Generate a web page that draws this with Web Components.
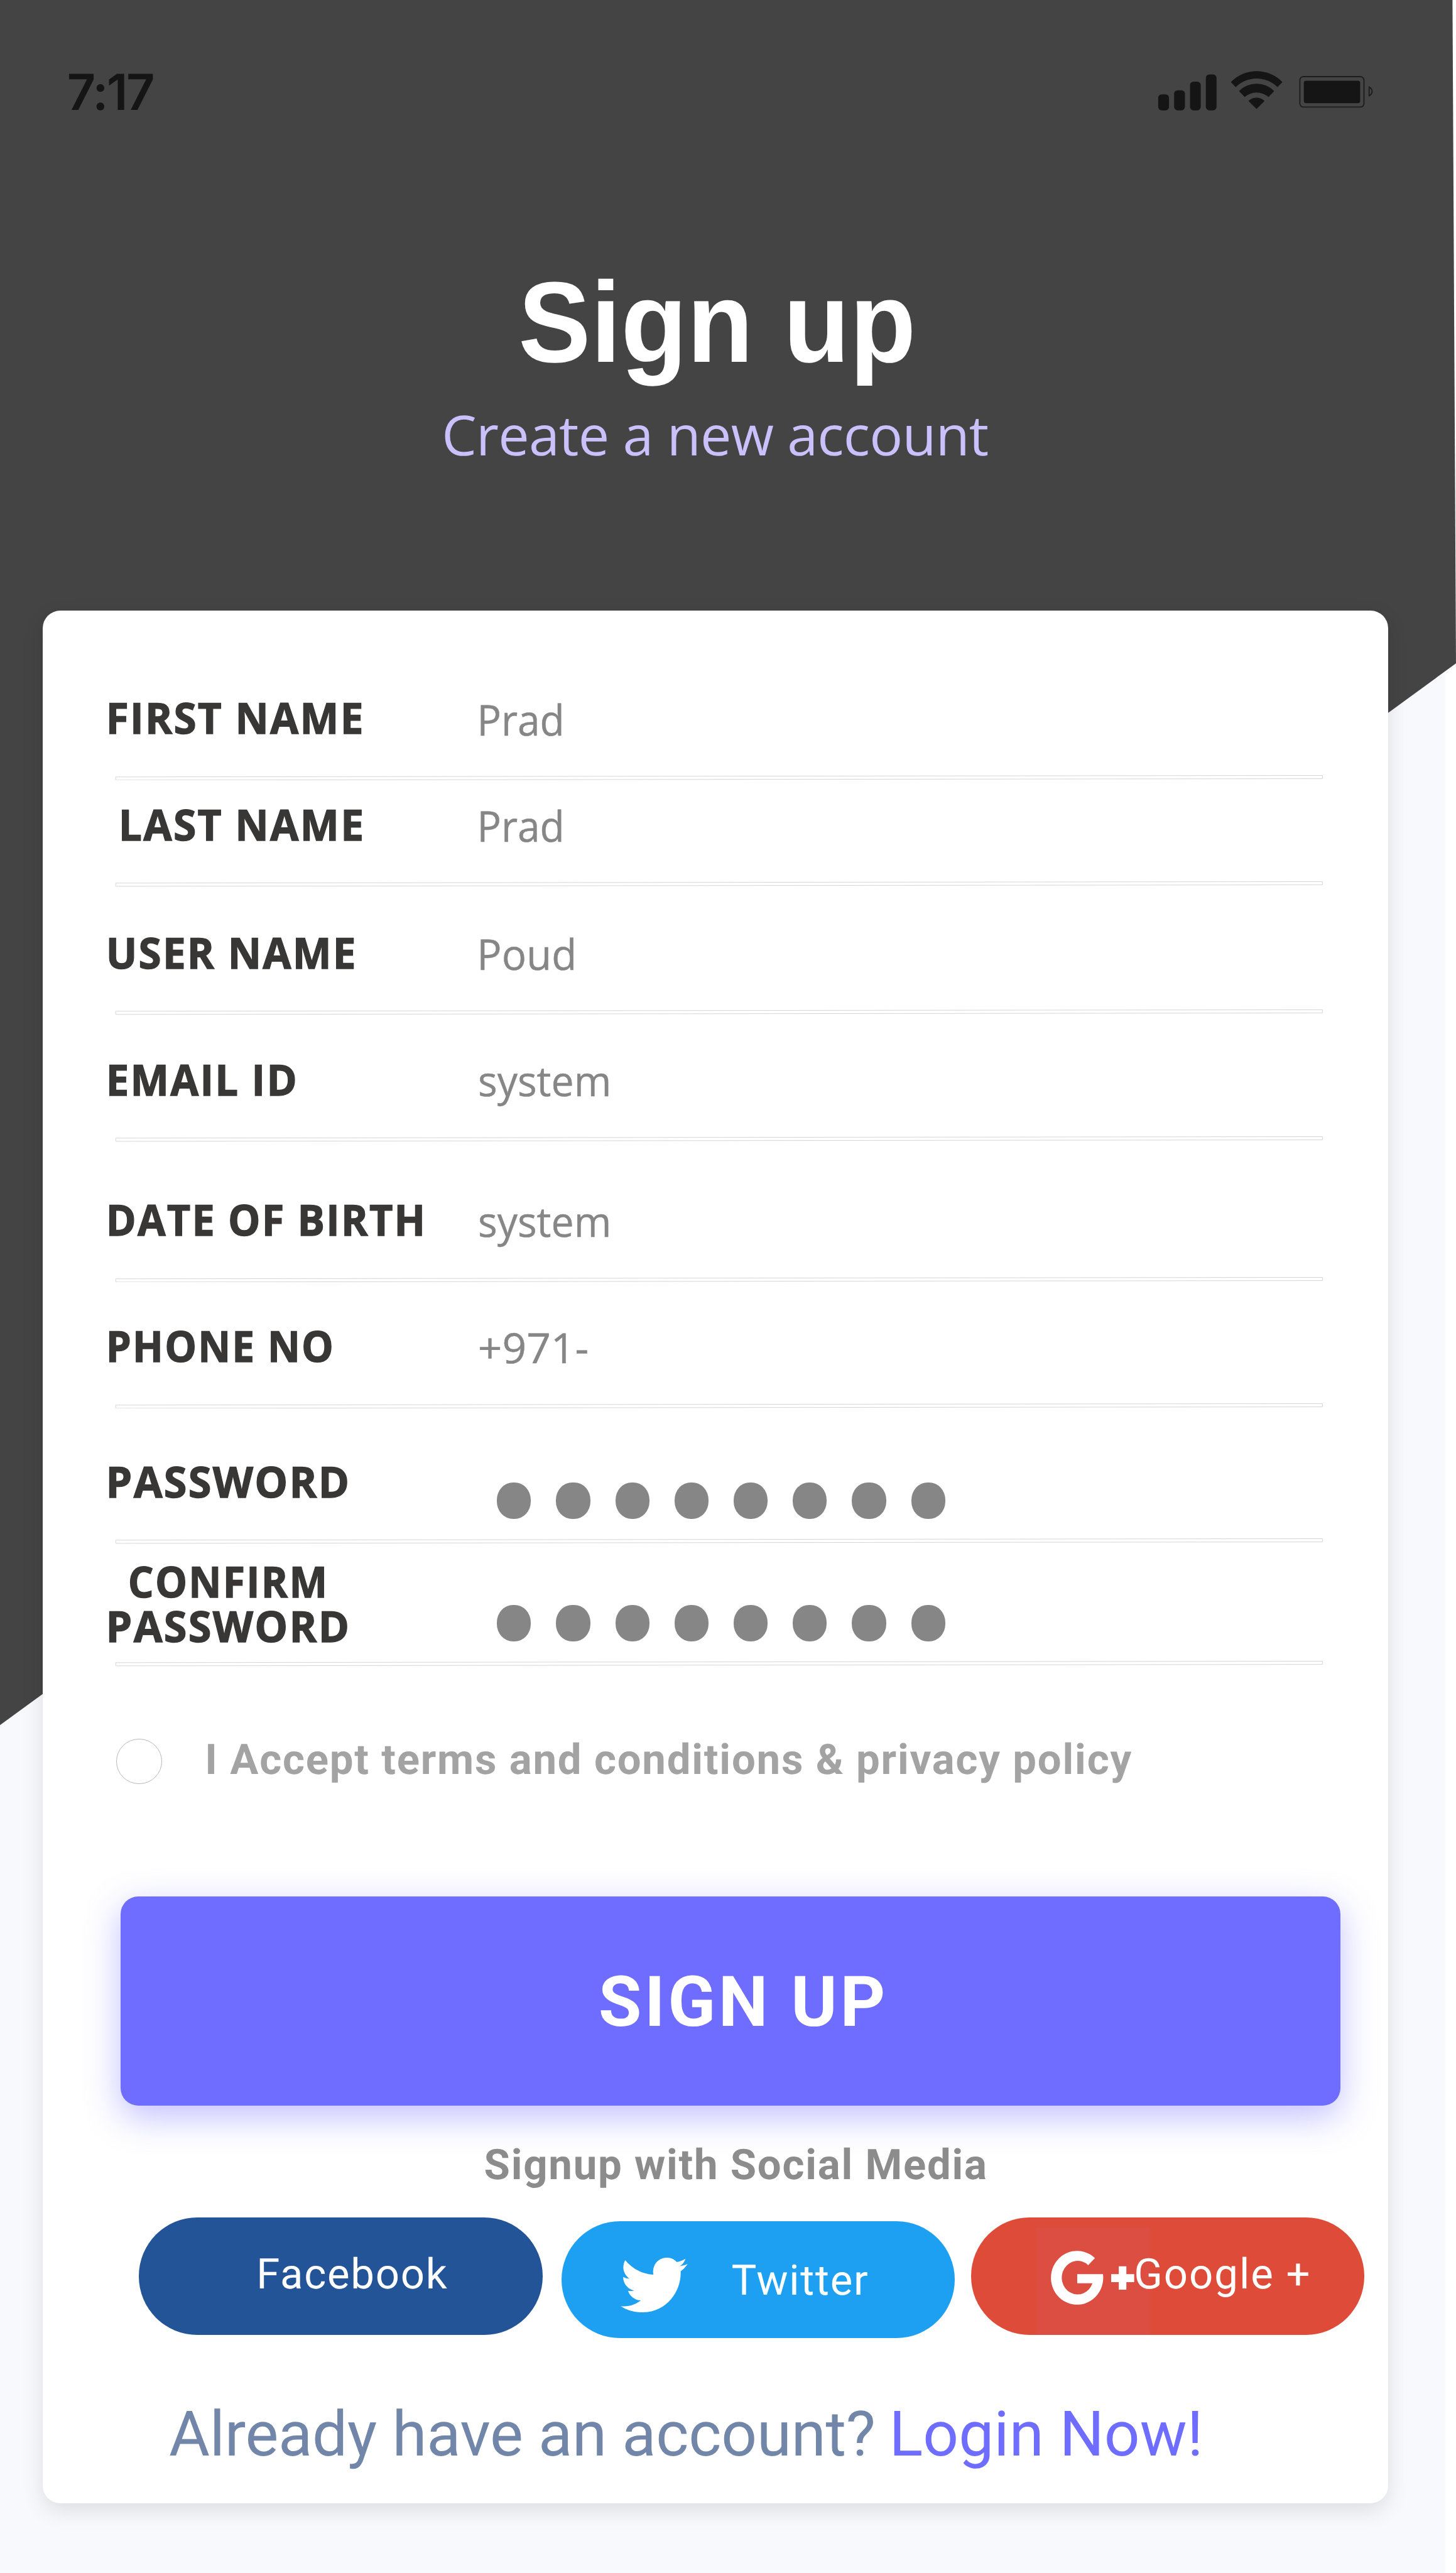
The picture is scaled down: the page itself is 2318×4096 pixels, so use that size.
<!DOCTYPE html>
<html lang="en">
<head>
<meta charset="utf-8">
<title>Sign up</title>
<style>
html, body { margin: 0; width: 2318px; height: 4096px; overflow: hidden; background: #fff; }
</style>
</head>
<body>
<signup-screen>
  <status-bar></status-bar>
  <page-heading>
    <ink-text slot="title" font="Liberation Sans" size="196" weight="700" width="670" height="136" squeeze>Sign up</ink-text>
    <ink-text slot="subtitle" font="Open Sans" size="94.5" weight="400" width="929" height="68">Create a new account</ink-text>
  </page-heading>
  <form-card>
    <field-row style="--h:283.8px">
      <ink-text slot="label" font="Open Sans" size="73.2" weight="700" width="433.6" height="52.3" track="2.5" outline="1.3" squeeze>FIRST NAME</ink-text>
      <ink-text slot="value" font="Open Sans" size="72.4" weight="400" width="139.6" height="52" outline="1" squeeze>Prad</ink-text>
    </field-row>
    <field-row style="--h:181.8px;--lx:20.7px">
      <ink-text slot="label" font="Open Sans" size="73.2" weight="700" width="412.9" height="52.3" track="2.5" outline="1.3" squeeze>LAST NAME</ink-text>
      <ink-text slot="value" font="Open Sans" size="72.4" weight="400" width="139.6" height="52" outline="1" squeeze>Prad</ink-text>
    </field-row>
    <field-row style="--h:218.7px">
      <ink-text slot="label" font="Open Sans" size="73.2" weight="700" width="420.9" height="52.3" track="2.5" outline="1.3" squeeze>USER NAME</ink-text>
      <ink-text slot="value" font="Open Sans" size="72.4" weight="400" width="160.3" height="52" outline="1" squeeze>Poud</ink-text>
    </field-row>
    <field-row style="--h:216.9px">
      <ink-text slot="label" font="Open Sans" size="73.2" weight="700" width="319.6" height="52.3" track="2.5" outline="1.3" squeeze>EMAIL ID</ink-text>
      <ink-text slot="value" font="Open Sans" size="71" weight="400" width="220" height="52" squeeze>system</ink-text>
    </field-row>
    <field-row style="--h:240.1px">
      <ink-text slot="label" font="Open Sans" size="73.2" weight="700" width="537.3" height="52.3" track="2.5" outline="1.3" squeeze>DATE OF BIRTH</ink-text>
      <ink-text slot="value" font="Open Sans" size="71" weight="400" width="220" height="52" squeeze>system</ink-text>
    </field-row>
    <field-row style="--h:215px">
      <ink-text slot="label" font="Open Sans" size="73.2" weight="700" width="382.6" height="52.3" track="2.5" outline="1.3" squeeze>PHONE NO</ink-text>
      <ink-text slot="value" font="Open Sans" size="71" weight="400" width="184.2" height="52" squeeze>+971-</ink-text>
    </field-row>
    <field-row style="--h:231.5px;--vb:-37px;--vx:29px">
      <ink-text slot="label" font="Open Sans" size="73.2" weight="700" width="409" height="52.3" track="2.5" outline="1.3" squeeze>PASSWORD</ink-text>
      <mask-dots slot="value"></mask-dots>
    </field-row>
    <field-row style="--h:209.2px;--pb:33.1px;--vb:.7px;--vx:29px">
      <ink-text slot="label" font="Open Sans" size="73.2" weight="700" width="334" height="52.3" track="2.5" outline="1.3" squeeze style="margin:0 0 23.7px 35px">CONFIRM</ink-text>
      <ink-text slot="label" font="Open Sans" size="73.2" weight="700" width="409" height="52.3" track="2.5" outline="1.3" squeeze>PASSWORD</ink-text>
      <mask-dots slot="value"></mask-dots>
    </field-row>
    <terms-check>
      <ink-text font="Roboto" size="72" weight="700" width="1579" height="51.2">I Accept terms and conditions &amp; privacy policy</ink-text>
    </terms-check>
    <primary-button>
      <ink-text font="Roboto" size="119.7" weight="700" width="482" height="85.1">SIGN UP</ink-text>
    </primary-button>
    <social-group>
      <ink-text slot="title" font="Roboto" size="72" weight="700" width="855.2" height="51.2">Signup with Social Media</ink-text>
      <social-pill brand="facebook">
        <ink-text font="Roboto" size="72" weight="400" width="320.7" height="51.2">Facebook</ink-text>
      </social-pill>
      <social-pill brand="twitter">
        <ink-text font="Roboto" size="72" weight="400" width="231.2" height="51.2">Twitter</ink-text>
      </social-pill>
      <social-pill brand="google">
        <ink-text font="Roboto" size="72" weight="400" width="295" height="51.2">Google +</ink-text>
      </social-pill>
    </social-group>
    <login-prompt>
      <ink-text font="Roboto" size="107" weight="400" width="1203.4" height="76">Already have an account?</ink-text>
      <ink-text slot="link" font="Roboto" size="107" weight="400" width="520.5" height="76">Login Now!</ink-text>
    </login-prompt>
  </form-card>
</signup-screen>

<script>
const ZOOM = 0.93205;

const define = (name, html, setup) => {
  const template = document.createElement('template');
  template.innerHTML = html;
  customElements.define(name, class extends HTMLElement {
    connectedCallback() {
      if (this.shadowRoot) return;
      this.attachShadow({ mode: 'open' }).append(template.content.cloneNode(true));
      if (setup) setup(this, this.shadowRoot);
    }
  });
};

/* A line of text whose box is its visible ink: left edge to right edge, cap top to baseline.
   "outline" keeps room on both sides for a text stroke. */
const pen = document.createElement('canvas').getContext('2d');
define('ink-text', `
  <style>
    :host { display: block; flex: none; }
    span { display: inline-block; white-space: pre; vertical-align: top; transform-origin: 0 0; }
  </style>
  <span><slot></slot></span>`, (host, root) => {
  const num = (key) => parseFloat(host.getAttribute(key)) || 0;
  const text = host.textContent, size = num('size'), outline = num('outline');
  const width = num('width'), height = num('height'), inner = width - 2 * outline;
  const weight = host.getAttribute('weight'), family = `"${host.getAttribute('font')}", sans-serif`;
  /* measured at 1000px, so that no rounding to whole pixels matters */
  pen.font = `${weight} 1000px ${family}`;
  const m = pen.measureText(text), em = size / 1000;
  const lead = -m.actualBoundingBoxLeft * em;
  const ink = m.actualBoundingBoxRight * em - lead;
  const gaps = text.length - 1;
  const squeeze = host.hasAttribute('squeeze');
  const track = squeeze ? num('track') : (inner - ink) / gaps;
  const k = squeeze ? inner / (ink + track * gaps) : 1;
  const snap = (v) => Math.round(v * em * ZOOM) / ZOOM;
  const a = snap(m.fontBoundingBoxAscent), d = snap(m.fontBoundingBoxDescent);
  host.style.width = width + 'px';
  host.style.height = height + 'px';
  const s = root.querySelector('span').style;
  s.font = `${weight} ${size}px ${family}`;
  s.lineHeight = (2 * height - a + d) + 'px';
  s.letterSpacing = track + 'px';
  s.transform = `translate(${outline * 1.5 - lead * k}px, 1.6px) scaleX(${k})`;
});

define('signup-screen', `
  <style>
    :host { display: grid; width: 2487px; height: 4394.5px; overflow: hidden; zoom: ${ZOOM}; text-rendering: geometricPrecision; }
    svg, main { grid-area: 1 / 1; }
    svg { display: block; width: 2487px; height: 4394.5px; }
    main { display: flex; flex-direction: column; align-items: flex-start; min-width: 0; }
  </style>
  <svg viewBox="0 0 2487 4394.5" aria-hidden="true">
    <rect width="2468" height="4395" fill="#f8f9fd"/>
    <polygon points="2468,0 2487,0 2487,1133 2468,1147" fill="#fff"/>
    <polygon points="0,0 2481,0 2487,1133 0,2946.4" fill="#444"/>
  </svg>
  <main><slot></slot></main>`);

define('status-bar', `
  <style>
    :host { display: flex; justify-content: space-between; align-items: flex-start; box-sizing: border-box;
      width: 2487px; height: 190px; padding: 120px 141px 0 117.3px; color: #151515; }
    ink-text { margin-top: 6.5px; }
    svg { display: block; width: 370px; height: 70px; }
  </style>
  <ink-text font="Inter" size="84.8" weight="600" width="144.7" height="61.7">7:17</ink-text>
  <svg viewBox="1976 120 370 70" fill="#151515" aria-hidden="true">
    <rect x="1978" y="161" width="18.5" height="27.3" rx="6"/>
    <rect x="2005.2" y="154" width="18.5" height="34.3" rx="6"/>
    <rect x="2032.4" y="139.3" width="18.3" height="49" rx="6"/>
    <rect x="2059.4" y="127" width="18.3" height="61.3" rx="6"/>
    <path d="M2102.2 140A61.1 61.1 0 0 1 2190.2 140L2181.7 148.7A50.2 50.2 0 0 0 2110.5 148.7Z"/>
    <path d="M2116 155.3A42.7 42.7 0 0 1 2176.2 155.3L2166.4 165.7A30.3 30.3 0 0 0 2125.8 165.7Z"/>
    <path d="M2132.2 172.3A19.6 19.6 0 0 1 2159.7 172.3L2146 186Z"/>
    <g fill="none" stroke="#1c1c1c" stroke-width="2">
      <rect x="2220" y="130.7" width="109.5" height="52" rx="6"/>
      <path d="M2338.4 148.5Q2343.4 151 2343.4 156T2338.4 163.5Z"/>
    </g>
    <rect x="2226.8" y="137.7" width="96.2" height="38.3" rx="4"/>
  </svg>`);

define('page-heading', `
  <style>
    :host { display: flex; flex-direction: column; align-items: center; width: 2447px; padding-top: 292px; gap: 91.7px; }
    ::slotted([slot=title]) { color: #fff; }
    ::slotted([slot=subtitle]) { color: #c9c0fc; }
  </style>
  <slot name="title"></slot><slot name="subtitle"></slot>`);

define('form-card', `
  <style>
    :host { display: flex; flex-direction: column; flex: none; box-sizing: border-box; margin: 265px 0 0 72.5px;
      width: 2299px; height: 3233.3px; border-radius: 30px; background: #fff;
      box-shadow: 0 12px 36px rgba(0, 0, 0, .11); }
  </style>
  <slot></slot>`);

define('field-row', `
  <style>
    :host { display: flex; flex-direction: column; justify-content: flex-end; flex: none; height: var(--h); }
    .line { display: flex; align-items: flex-end; padding: 0 0 var(--pb, 70.7px) 112.5px; height: 0; }
    .label { flex: none; box-sizing: border-box; width: 635px; padding-left: var(--lx, 0px); color: #383736;
      -webkit-text-stroke: 1.4px #383736; }
    .value { color: #868686; margin: 0 0 var(--vb, -2.6px) var(--vx, 0px); -webkit-text-stroke: .5px #868686; }
    svg { display: block; flex: none; width: 2066px; height: 9px; margin: 0 0 -6.4px 122.5px; }
  </style>
  <div class="line">
    <div class="label"><slot name="label"></slot></div>
    <div class="value"><slot name="value"></slot></div>
  </div>
  <svg viewBox="0 0 2066 9" fill="none" stroke="#d3d3d3" aria-hidden="true"><path d="M.8 3L2065.2 .5V6L.8 8.5Z"/></svg>`);

define('mask-dots', `
  <style>
    :host { display: flex; gap: 43.1px; }
    i { width: 58px; height: 62px; border-radius: 48%; background: #868686; }
  </style>
  <i></i><i></i><i></i><i></i><i></i><i></i><i></i><i></i>`);

define('terms-check', `
  <style>
    :host { display: flex; align-items: flex-start; flex: none; margin: 129.7px 0 0 126px; height: 78px; gap: 78.2px; color: #a3a3a3; }
    i { box-sizing: border-box; width: 78px; height: 78px; border: 1px solid #b9b9b9; border-radius: 50%; }
    ::slotted(ink-text) { margin-top: 10.4px; }
  </style>
  <i></i><slot></slot>`);

define('primary-button', `
  <style>
    :host { display: block; flex: none; box-sizing: border-box; margin: 191.8px 0 0 133.2px; width: 2083.6px; height: 357.8px;
      padding: 137.8px 0 0 820.3px; border-radius: 30px; background: #6f6dff; color: #fff;
      box-shadow: 0 19px 60px rgba(111, 109, 255, .43); }
  </style>
  <slot></slot>`);

define('social-group', `
  <style>
    :host { display: block; flex: none; margin-top: 75.1px; }
    .title { padding-left: 756.5px; color: #8c8c8c; }
    .pills { display: flex; align-items: flex-start; height: 200px; margin-top: 64.6px; padding-left: 165.1px; }
  </style>
  <div class="title"><slot name="title"></slot></div>
  <div class="pills"><slot></slot></div>`);

const brandIcons = {
  twitter: `<svg style="width:114.3px;height:93.4px;margin:62.3px 75.9px 0 101.3px" viewBox="0 2.25 24 19.5" preserveAspectRatio="none"><path fill="#fff" d="M23.953 4.57a10 10 0 01-2.825.775 4.958 4.958 0 002.163-2.723c-.951.555-2.005.959-3.127 1.184a4.92 4.92 0 00-8.384 4.482C7.69 8.095 4.067 6.13 1.64 3.162a4.822 4.822 0 00-.666 2.475c0 1.71.87 3.213 2.188 4.096a4.904 4.904 0 01-2.228-.616v.06a4.923 4.923 0 003.946 4.827 4.996 4.996 0 01-2.212.085 4.936 4.936 0 004.604 3.417 9.867 9.867 0 01-6.102 2.105c-.39 0-.779-.023-1.17-.067a13.995 13.995 0 007.557 2.209c9.053 0 13.998-7.496 13.998-13.985 0-.21 0-.42-.015-.63A9.935 9.935 0 0024 4.59z"/></svg>`,
  google: `<svg style="width:142.7px;height:92.3px;margin:56.4px 2px 0 136.7px" viewBox="107 191 428 277" fill="#fff"><path d="M333 229A134 138 0 1 0 374 311H242V358H320A81 86 0 1 1 298 265Z"/><path d="M455 271H494V311H534V352H494V391H455V352H416V311H455Z"/></svg>`
};
define('social-pill', `
  <style>
    :host { display: flex; align-items: flex-start; flex: none; box-sizing: border-box; height: 200px; border-radius: 100px; color: #fff; }
    :host([brand=facebook]) { width: 689.4px; background: #225497; padding-left: 206px; --top: 70.8px; }
    :host([brand=twitter]) { width: 671.8px; background: #1ea0f2; margin: 6px 28px 0 32px; --top: 75.4px; }
    :host([brand=google]) { width: 672px; --top: 70.8px;
      background: linear-gradient(#db4e41, #db4e41) 111.3px 16.6px / 194.7px 184px no-repeat #de4b38; }
    .icon { display: contents; }
    .icon svg { display: block; flex: none; }
    ::slotted(ink-text) { margin-top: var(--top); }
  </style>
  <span class="icon"></span><slot></slot>`, (host, root) => {
  root.querySelector('.icon').innerHTML = brandIcons[host.getAttribute('brand')] || '';
});

define('login-prompt', `
  <style>
    :host { display: flex; flex: none; gap: 35.2px; margin: 130.6px 0 0 216.1px; color: #7186a8; }
    ::slotted([slot=link]) { color: #6f6dff; }
  </style>
  <slot></slot><slot name="link"></slot>`);
</script>
</body>
</html>
